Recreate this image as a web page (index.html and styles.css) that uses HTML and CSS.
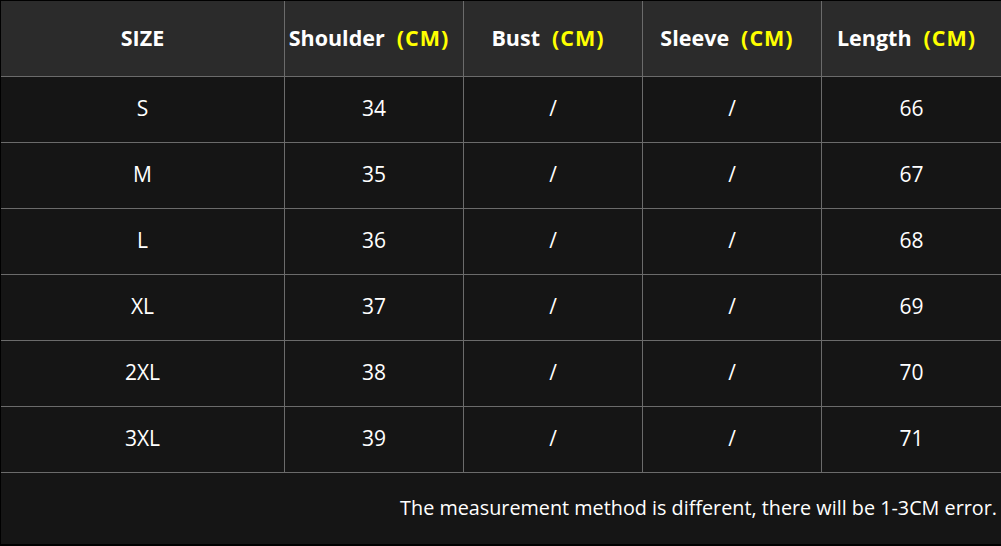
FILE: index.html
```html
<!DOCTYPE html>
<html lang="en">
<head>
<meta charset="utf-8">
<title>Size Chart</title>
<link rel="stylesheet" href="styles.css">
</head>
<body>
<div class="chart">
  <div class="row head">
    <div class="cell c1">SIZE</div>
    <div class="cell">Shoulder<span class="unit">(CM)</span></div>
    <div class="cell">Bust<span class="unit">(CM)</span></div>
    <div class="cell">Sleeve<span class="unit">(CM)</span></div>
    <div class="cell last">Length<span class="unit">(CM)</span></div>
  </div>
  <div class="row">
    <div class="cell c1">S</div><div class="cell">34</div><div class="cell">/</div><div class="cell">/</div><div class="cell last">66</div>
  </div>
  <div class="row">
    <div class="cell c1">M</div><div class="cell">35</div><div class="cell">/</div><div class="cell">/</div><div class="cell last">67</div>
  </div>
  <div class="row">
    <div class="cell c1">L</div><div class="cell">36</div><div class="cell">/</div><div class="cell">/</div><div class="cell last">68</div>
  </div>
  <div class="row">
    <div class="cell c1">XL</div><div class="cell">37</div><div class="cell">/</div><div class="cell">/</div><div class="cell last">69</div>
  </div>
  <div class="row">
    <div class="cell c1">2XL</div><div class="cell">38</div><div class="cell">/</div><div class="cell">/</div><div class="cell last">70</div>
  </div>
  <div class="row">
    <div class="cell c1">3XL</div><div class="cell">39</div><div class="cell">/</div><div class="cell">/</div><div class="cell last">71</div>
  </div>
  <div class="note">The measurement method is different, there will be 1-3CM error.</div>
</div>
</body>
</html>
```
FILE: styles.css
```css
* { box-sizing: border-box; }
html, body { margin: 0; padding: 0; background: #151515; }
.chart {
  width: 1001px;
  height: 546px;
  background: #151515;
  border-top: 1px solid #000;
  border-left: 1px solid #000;
  border-bottom: 2px solid #000;
  font-family: "Open Sans", "Noto Sans", sans-serif;
  color: #fff;
  display: flex;
  flex-direction: column;
}
.row {
  display: grid;
  grid-template-columns: 284px 179px 179px 179px 179px;
  height: 66px;
  border-bottom: 1px solid #6b6b6b;
  font-size: 21px;
}
.row.head {
  height: 76px;
  background: #2b2b2b;
  font-weight: 700;
  font-size: 21.5px;
}
.cell {
  display: flex;
  align-items: center;
  justify-content: center;
  border-right: 1px solid #6b6b6b;
  white-space: nowrap;
  padding-bottom: 3px;
}
.head .cell { padding-bottom: 3px; }
.cell.last { border-right: none; }
.unit {
  color: #ffff00;
  margin-left: 12px;
  margin-right: 10px;
  letter-spacing: 1px;
}
.note {
  flex: 1;
  display: flex;
  align-items: center;
  justify-content: flex-end;
  padding-right: 4px;
  padding-bottom: 2px;
  font-size: 19.8px;
}
```
